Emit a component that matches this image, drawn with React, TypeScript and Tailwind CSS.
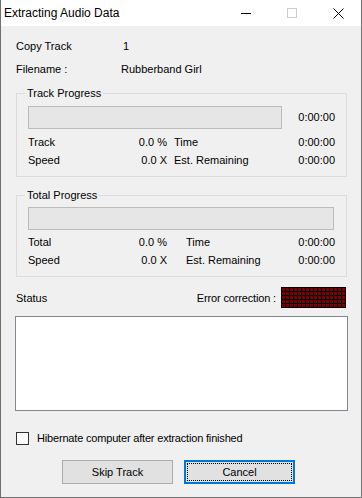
import React from "react";

function ProgressBar({ w }: { w: string }) {
  return <div className={`${w} h-[23px] border border-[#bcbcbc] bg-[#e6e6e6]`} />;
}

function StatRow({
  l1,
  v1,
  l2,
  v2,
  gap,
  w2,
}: {
  l1: string;
  v1: string;
  l2: string;
  v2: string;
  gap: string;
  w2: string;
}) {
  return (
    <div className="flex h-[18px] items-center">
      <div className="flex w-[139px] justify-between">
        <span>{l1}</span>
        <span>{v1}</span>
      </div>
      <div className={gap} />
      <div className={`flex ${w2} justify-between`}>
        <span>{l2}</span>
        <span>{v2}</span>
      </div>
    </div>
  );
}

export default function App() {
  const cells = Array.from({ length: 80 });
  return (
    <div className="w-[362px] h-[498px] bg-[#f0f0f0] border-l border-r border-b border-[#707070] font-['Liberation_Sans',Arial,sans-serif] text-[11px] text-black leading-[13px] flex flex-col">
      {/* Title bar */}
      <div className="h-[26px] bg-white flex items-center justify-between shrink-0">
        <span className="pl-[3px] text-[12px] leading-[14px]">Extracting Audio Data</span>
        <div className="flex h-full">
          <div className="w-[46px] h-full flex items-center justify-center">
            <div className="w-[10px] h-[1px] bg-black" />
          </div>
          <div className="w-[46px] h-full flex items-center justify-center">
            <div className="w-[10px] h-[10px] border border-[#cccccc]" />
          </div>
          <div className="w-[46px] h-full flex items-center justify-center">
            <svg width="11" height="11" viewBox="0 0 11 11">
              <path d="M0.5 0.5 L10.5 10.5 M10.5 0.5 L0.5 10.5" stroke="black" strokeWidth="1" />
            </svg>
          </div>
        </div>
      </div>

      {/* Content */}
      <div className="flex flex-col pl-[15px] pr-[14px]">
        <div className="mt-[11px] flex h-[18px] items-center">
          <span className="w-[107px]">Copy Track</span>
          <span>1</span>
        </div>
        <div className="mt-[5px] flex h-[18px] items-center">
          <span className="w-[105px]">Filename :</span>
          <span>Rubberband Girl</span>
        </div>

        {/* Track Progress */}
        <div className="relative mt-[15px] w-[331px] border border-[#dcdcdc] pl-[11px] pr-[10px] pt-[12px] pb-[7px]">
          <span className="absolute left-[8px] top-[-7px] bg-[#f0f0f0] px-[2px]">Track Progress</span>
          <div className="flex items-center justify-between">
            <ProgressBar w="w-[254px]" />
            <span className="pr-[1px]">0:00:00</span>
          </div>
          <div className="mt-[4px]">
            <StatRow l1="Track" v1="0.0 %" l2="Time" v2="0:00:00" gap="w-[7px]" w2="w-[161px]" />
            <StatRow l1="Speed" v1="0.0 X" l2="Est. Remaining" v2="0:00:00" gap="w-[7px]" w2="w-[161px]" />
          </div>
        </div>

        {/* Total Progress */}
        <div className="relative mt-[18px] w-[331px] border border-[#dcdcdc] pl-[11px] pr-[10px] pt-[11px] pb-[7px]">
          <span className="absolute left-[8px] top-[-7px] bg-[#f0f0f0] px-[2px]">Total Progress</span>
          <ProgressBar w="w-[306px]" />
          <div className="mt-[3px]">
            <StatRow l1="Total" v1="0.0 %" l2="Time" v2="0:00:00" gap="w-[19px]" w2="w-[149px]" />
            <StatRow l1="Speed" v1="0.0 X" l2="Est. Remaining" v2="0:00:00" gap="w-[19px]" w2="w-[149px]" />
          </div>
        </div>

        {/* Status row */}
        <div className="mt-[10px] flex h-[21px] items-center justify-between w-[330px]">
          <span className="pt-[2px]">Status</span>
          <div className="flex items-center">
            <span className="pt-[2px] mr-[5px] tracking-[-0.15px]">Error correction :</span>
            <div className="grid grid-cols-[repeat(16,3px)] gap-[1px] p-[1px] bg-black">
              {cells.map((_, i) => (
                <div key={i} className="w-[3px] h-[3px] bg-[#800000]" />
              ))}
            </div>
          </div>
        </div>

        <div className="mt-[8px] -ml-[1px] w-[333px] h-[95px] bg-white border border-[#828790]" />

        {/* Checkbox */}
        <div className="mt-[21px] flex items-center h-[13px]">
          <div className="w-[13px] h-[13px] border border-[#333333] bg-white" />
          <span className="ml-[8px] tracking-[-0.18px]">Hibernate computer after extraction finished</span>
        </div>

        {/* Buttons */}
        <div className="mt-[15px] flex pl-[46px] gap-[11px]">
          <div className="w-[111px] h-[24px] border border-[#adadad] bg-[#e1e1e1] flex items-center justify-center">
            Skip Track
          </div>
          <div className="relative w-[111px] h-[24px] border-2 border-[#0078d7] bg-[#e1e1e1] flex items-center justify-center">
            <div className="absolute inset-[1px] border border-dotted border-black" />
            Cancel
          </div>
        </div>
      </div>
    </div>
  );
}
